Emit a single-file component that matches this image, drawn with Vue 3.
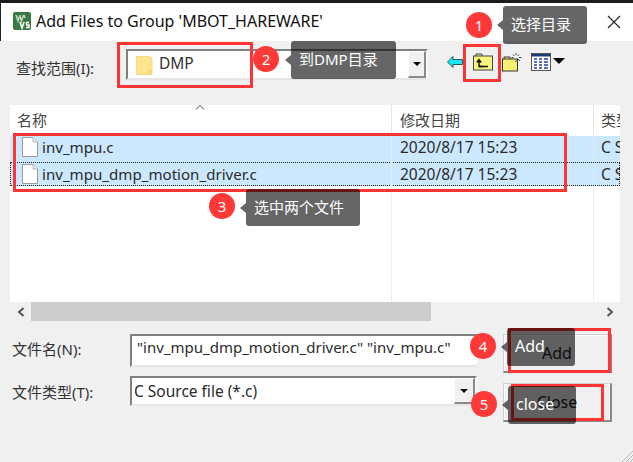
<script setup>
const files = [
  { name: 'inv_mpu.c', date: '2020/8/17 15:23', focus: false },
  { name: 'inv_mpu_dmp_motion_driver.c', date: '2020/8/17 15:23', focus: true }
]
const marks = [
  { n: 1, cls: 'm1', text: '选择目录' },
  { n: 2, cls: 'm2', text: '到DMP目录' },
  { n: 3, cls: 'm3', text: '选中两个文件' },
  { n: 4, cls: 'm4', text: 'Add' },
  { n: 5, cls: 'm5', text: 'close' }
]
</script>

<template>
  <div class="app">
    <header class="title">
      <svg class="logo" width="18" height="18" viewBox="0 0 18 18">
        <rect x="0" y="0" width="18" height="18" rx="2" fill="#3a7a42" />
        <path d="M3 3l2 6 2-6M6.500 3l2 6 2-6M11 3l1 3" fill="none" stroke="#c4dcc2" stroke-width="1.500" />
        <path d="M7 10l2 6 2-6" fill="none" stroke="#fff" stroke-width="1.600" />
        <path d="M16 10.500h-2.500v2.500h2.500v2.500h-3" fill="none" stroke="#fff" stroke-width="1.400" />
      </svg>
      <span class="title-text">Add Files to Group 'MBOT_HAREWARE'</span>
      <svg class="close-x" width="14" height="14" viewBox="0 0 14 14">
        <path d="M1 1l12 12M13 1L1 13" stroke="#222" stroke-width="1.100" fill="none" />
      </svg>
    </header>

    <section class="toolbar">
      <label class="look-label">查找范围(I):</label>
      <div class="combo look-combo">
        <svg class="dmp-folder" width="17" height="20" viewBox="0 0 17 20">
          <path d="M0.500 1.500h12.500l3 1v17h-15.500z" fill="#fde58f" stroke="#f4d98a" />
          <path d="M12 19.500v-5h4v5z" fill="#f7d87c" />
        </svg>
        <span class="dmp-text">DMP</span>
        <span class="drop"><i class="caret"></i></span>
      </div>
      <div class="tools">
        <svg class="t-back" width="16" height="12" viewBox="0 0 16 12">
          <path d="M0.500 6L6 0.500V3.500H15.500V8.500H6V11.500z" fill="#19e6f2" stroke="#0a3a3c" stroke-width="0.800" />
        </svg>
        <svg class="t-up" width="20" height="18" viewBox="0 0 20 18">
          <path d="M3 3V1h6v2" fill="#f5f08a" stroke="#444" />
          <rect x="0.500" y="3" width="19" height="14" fill="#f8f47e" stroke="#444" />
          <path d="M10 13.500H6V7.500M3.800 9.500L6 6.800l2.200 2.700" fill="none" stroke="#111" stroke-width="1.500" />
          <path d="M6 13.500h9" stroke="#111" stroke-width="1.500" />
        </svg>
        <svg class="t-new" width="20" height="20" viewBox="0 0 20 20">
          <path d="M2 7V5h6v2" fill="#f5f08a" stroke="#333" />
          <rect x="0.500" y="7" width="15" height="12" fill="#f6f26e" stroke="#333" />
          <path d="M14 1v2M14 8v2M9.500 5.500h2M17 5.500h2.500M11 2.500l1.500 1.500M17 2.500L15.500 4M16 7l2 2" stroke="#444" stroke-width="1" />
        </svg>
        <svg class="t-view" width="20" height="18" viewBox="0 0 20 18">
          <rect x="0.500" y="0.500" width="19" height="17" fill="#fff" stroke="#555" />
          <rect x="1" y="1" width="18" height="2.500" fill="#1a3d78" />
          <path d="M3 6h3M8 6h3M13 6h4M3 9h3M8 9h3M13 9h4M3 12h3M8 12h3M13 12h4M3 15h3M8 15h3M13 15h4" stroke="#2a3aa8" stroke-width="1.600" />
        </svg>
        <i class="view-caret"></i>
      </div>
    </section>

    <section class="list">
      <div class="list-head">
        <span class="col col-name">名称<i class="sort"></i></span>
        <span class="col col-date">修改日期</span>
        <span class="col col-type">类型</span>
      </div>
      <div class="list-body">
        <div v-for="f in files" :key="f.name" class="row" :class="{ focus: f.focus }">
          <span class="col col-name">
            <svg class="file" width="16" height="20" viewBox="0 0 16 20">
              <path d="M0.500 0.500h10.500l4.500 4.500v14.500h-15z" fill="#fff" stroke="#9a9a9a" />
              <path d="M11 0.500v4.500h4.500" fill="#f2f2f2" stroke="#b5b5b5" />
            </svg>
            {{ f.name }}
          </span>
          <span class="col col-date">{{ f.date }}</span>
          <span class="col col-type">C Source file</span>
        </div>
      </div>
      <div class="hscroll">
        <span class="arrow">
          <svg width="8" height="10" viewBox="0 0 8 10"><path d="M6.500 1L2 5l4.500 4" fill="none" stroke="#555" stroke-width="2" /></svg>
        </span>
        <span class="thumb"></span>
        <span class="arrow end">
          <svg width="8" height="10" viewBox="0 0 8 10"><path d="M1.500 1L6 5 1.500 9" fill="none" stroke="#555" stroke-width="2" /></svg>
        </span>
      </div>
    </section>

    <section class="bottom">
      <div class="form">
        <div class="form-row name-row">
          <label>文件名(N):</label>
          <div class="field name-field">"inv_mpu_dmp_motion_driver.c" "inv_mpu.c"</div>
        </div>
        <div class="form-row type-row">
          <label>文件类型(T):</label>
          <div class="combo type-combo">
            <span>C Source file (*.c)</span>
            <span class="drop"><i class="caret"></i></span>
          </div>
        </div>
      </div>
      <div class="buttons">
        <button class="btn">Add</button>
        <button class="btn">Close</button>
      </div>
    </section>

    <svg class="grip" width="12" height="12" viewBox="0 0 12 12">
      <path d="M12 1L1 12M12 5L5 12M12 9L9 12" stroke="#b5b5b5" stroke-width="1" />
    </svg>

    <div class="red r1"></div>
    <div class="red r2"></div>
    <div class="red r3"></div>
    <div class="red r4"></div>
    <div class="red r5"></div>

    <div v-for="m in marks" :key="m.n" class="mark" :class="m.cls">
      <span class="badge">{{ m.n }}</span>
      <span class="tip">{{ m.text }}</span>
    </div>
  </div>
</template>

<style>
html, body { margin: 0; padding: 0; background: #f0f0f0; }
</style>

<style scoped>
.app {
  position: relative;
  width: 633px;
  height: 462px;
  overflow: hidden;
  display: flex;
  flex-direction: column;
  background: #f0f0f0;
  border-top: 3px solid #1c1c1c;
  box-sizing: border-box;
  font-family: "Noto Sans", "Noto Sans CJK SC", sans-serif;
  font-size: 15.5px;
  color: #1c1c1c;
}
.title {
  height: 38px;
  flex: none;
  background: #fff;
  display: flex;
  align-items: center;
  padding-left: 12px;
  padding-bottom: 2px;
  box-sizing: border-box;
  border-left: 1px solid #20242c;
}
.logo { flex: none; margin-right: 5px; }
.title-text { font-size: 16px; color: #111; white-space: nowrap; }
.close-x { margin-left: auto; margin-right: 12px; margin-top: 2px; }

.toolbar {
  height: 64px;
  flex: none;
  display: flex;
  align-items: flex-start;
  padding: 8px 0 0 16px;
  box-sizing: border-box;
}
.look-label { width: 110px; flex: none; font-size: 15px; color: #333; margin-top: 9px; line-height: 20px; white-space: nowrap; }
.combo {
  position: relative;
  display: flex;
  align-items: center;
  background: #fff;
  box-sizing: border-box;
  border-style: solid;
  border-width: 2px;
  border-color: #808080 #f8f8f8 #e6e6e6 #808080;
}
.look-combo { width: 302px; height: 31px; }
.dmp-folder { margin-left: 8px; flex: none; }
.dmp-text { margin-left: 6px; margin-bottom: 4px; font-size: 15.5px; color: #333; }
.drop {
  position: absolute;
  right: 0;
  top: 0;
  bottom: 0;
  width: 18px;
  display: flex;
  align-items: center;
  justify-content: center;
  background: #f0f0f0;
  box-sizing: border-box;
  border-style: solid;
  border-width: 1px 2px 2px 1px;
  border-color: #fff #8a8a8a #8a8a8a #fff;
}
.caret {
  width: 0;
  height: 0;
  border-style: solid;
  border-width: 4px 4.500px 0;
  border-color: #000 transparent transparent;
}
.tools { display: flex; align-items: flex-start; margin-left: 19px; }
.t-back { margin-top: 7px; flex: none; }
.t-up { margin-top: 4px; margin-left: 10px; flex: none; }
.t-new { margin-top: 3px; margin-left: 9px; flex: none; }
.t-view { margin-top: 4px; margin-left: 9px; flex: none; }
.view-caret {
  margin: 9px 0 0 2px;
  width: 0;
  height: 0;
  border-style: solid;
  border-width: 6px 6px 0;
  border-color: #000 transparent transparent;
}

.list {
  flex: none;
  width: 610px;
  height: 216px;
  margin-left: 10px;
  background: #fff;
  display: flex;
  flex-direction: column;
  overflow: hidden;
}
.list-head {
  height: 28px;
  flex: none;
  display: flex;
  align-items: center;
  color: #444;
  font-size: 15px;
  box-sizing: border-box;
}
.col {
  flex: none;
  height: 100%;
  display: flex;
  align-items: center;
  box-sizing: border-box;
  white-space: nowrap;
  overflow: hidden;
}
.col-name { width: 382px; padding-left: 7px; border-right: 1px solid #e5e5e5; position: relative; }
.col-date { width: 202px; padding-left: 8px; border-right: 1px solid #e5e5e5; }
.col-type { width: 26px; padding-left: 7px; }
.sort {
  position: absolute;
  left: 187px;
  top: 1px;
  width: 5px;
  height: 5px;
  border-top: 1.500px solid #888;
  border-left: 1.500px solid #888;
  transform: rotate(45deg);
}
.list-body {
  flex: 1;
  padding-top: 3px;
  background-image: linear-gradient(#e5eff8, #e5eff8), linear-gradient(#e5eff8, #e5eff8);
  background-size: 1px 100%, 1px 100%;
  background-position: 381px 0, 583px 0;
  background-repeat: no-repeat;
}
.row {
  height: 26px;
  display: flex;
  background: #cce8ff;
  color: #2b2b2b;
  box-sizing: border-box;
}
.row .col { padding-bottom: 4px; }
.row .col-name { font-size: 15.1px; border-right-color: #dbeeff; }
.row .col-date { border-right-color: #dbeeff; }
.row.focus {
  height: 24px;
  outline: 1px dotted #222;
  outline-offset: -1px;
}
.row.focus .col { padding-bottom: 0; }
.file { flex: none; margin: 0 4px 0 5px; }
.hscroll {
  height: 19px;
  flex: none;
  display: flex;
  background: #f0f0f0;
}
.arrow {
  width: 21px;
  flex: none;
  display: flex;
  align-items: center;
  justify-content: center;
}
.arrow.end { margin-left: auto; }
.thumb { width: 400px; background: #cdcdcd; }

.bottom {
  flex: 1;
  display: flex;
  align-items: flex-start;
  padding: 13px 0 0 12px;
}
.form { width: 466px; flex: none; }
.form-row { display: flex; align-items: center; }
.form-row label { width: 118px; flex: none; font-size: 15px; color: #333; white-space: nowrap; }
.name-row { height: 33px; }
.name-row label { margin-bottom: 4px; }
.type-row { height: 30px; margin-top: 9px; }
.field {
  width: 348px;
  height: 33px;
  background: #fff;
  box-sizing: border-box;
  border-style: solid;
  border-width: 2px;
  border-color: #808080 #f8f8f8 #e6e6e6 #808080;
  padding-left: 5px;
  line-height: 22px;
  font-size: 15px;
  white-space: nowrap;
  color: #2b2b2b;
}
.type-combo { width: 347px; height: 30px; padding-left: 2px; color: #2b2b2b; }
.type-combo .drop { width: 21px; }
.buttons {
  margin-left: 25px;
  display: flex;
  flex-direction: column;
  gap: 10px;
}
.btn {
  width: 109px;
  height: 39px;
  padding: 0;
  background: #f0f0f0;
  font: inherit;
  font-size: 16px;
  color: #222;
  box-sizing: border-box;
  border-style: solid;
  border-width: 1px 2px 2px 1px;
  border-color: #d0d0d0 #8a8a8a #8a8a8a #d0d0d0;
  box-shadow: inset 1px 1px 0 #fff;
}
.grip { position: absolute; right: 0; bottom: 0; }

.red {
  position: absolute;
  border: 3px solid #ff3434;
  box-sizing: border-box;
}
.r1 { left: 117px; top: 39px; width: 136px; height: 46px; }
.r2 { left: 463px; top: 41px; width: 38px; height: 38px; }
.r3 { left: 13px; top: 130px; width: 554px; height: 59px; }
.r4 { left: 508px; top: 325px; width: 103px; height: 45px; }
.r5 { left: 511px; top: 381px; width: 93px; height: 37px; }

.mark { position: absolute; }
.badge {
  position: absolute;
  width: 26px;
  height: 26px;
  border-radius: 50%;
  background: #ff3838;
  color: #fff;
  font-size: 15px;
  line-height: 26px;
  text-align: center;
}
.tip {
  position: absolute;
  box-sizing: border-box;
  height: 38px;
  line-height: 36px;
  padding-left: 8px;
  border-radius: 3px;
  background: rgba(0, 0, 0, 0.6);
  color: #fff;
  font-size: 15px;
  white-space: nowrap;
}
.tip::before {
  content: "";
  position: absolute;
  left: -6px;
  top: 14px;
  border-style: solid;
  border-width: 5px 6px 5px 0;
  border-color: transparent rgba(0, 0, 0, 0.6) transparent transparent;
}
.m1 .badge { left: 466px; top: 9px; }
.m1 .tip { left: 503px; top: 3px; width: 84px; }
.m2 .badge { left: 253px; top: 43px; }
.m2 .tip { left: 291px; top: 38px; width: 105px; }
.m3 .badge { left: 209px; top: 190px; }
.m3 .tip { left: 246px; top: 186px; width: 114px; height: 37px; }
.m4 .badge { left: 470px; top: 330px; }
.m4 .tip { left: 507px; top: 325px; width: 68px; font-size: 16px; }
.m5 .badge { left: 471px; top: 388px; }
.m5 .tip { left: 508px; top: 383px; width: 68px; font-size: 16px; }
</style>
